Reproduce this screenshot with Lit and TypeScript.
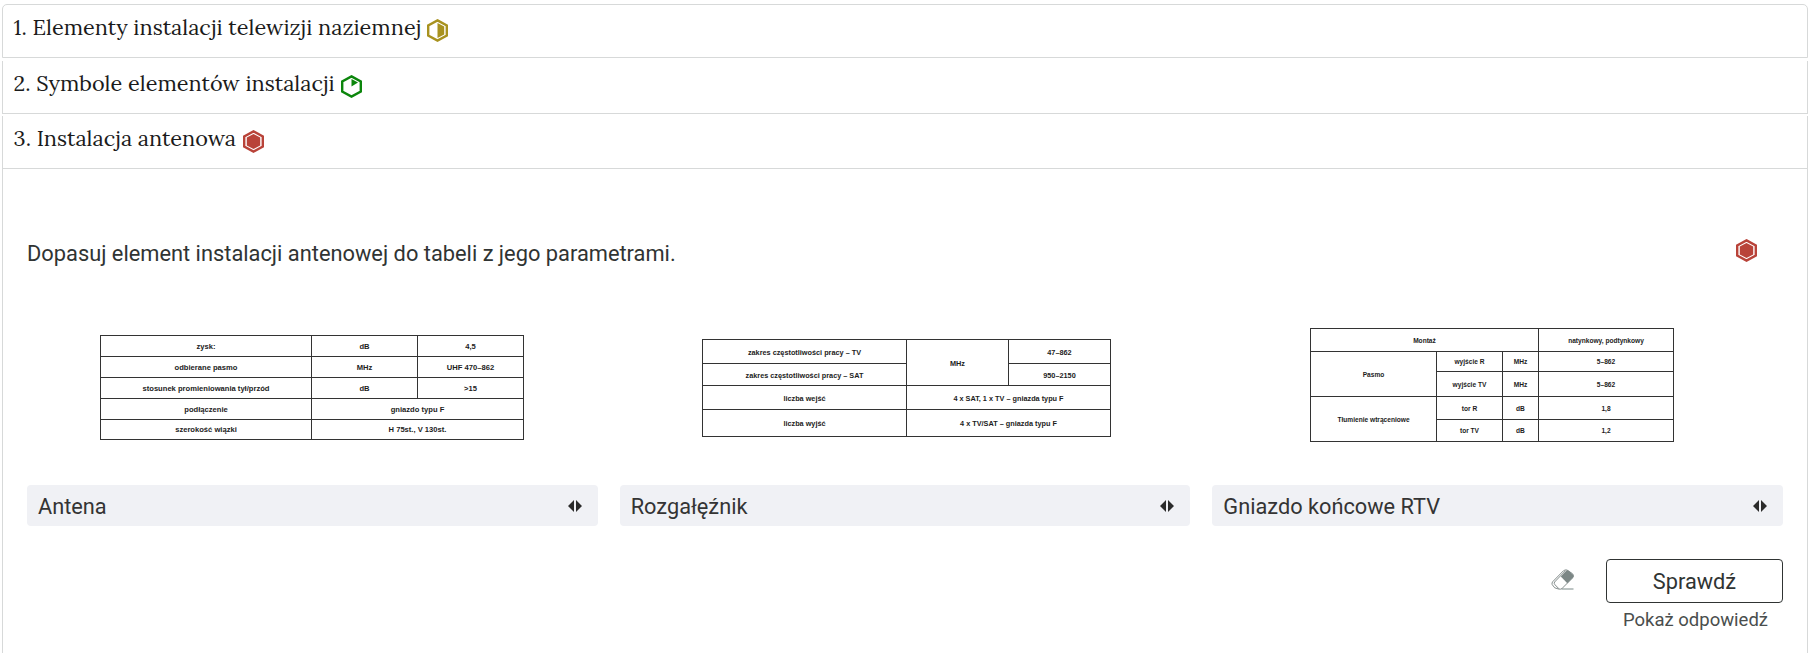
import { LitElement, html, css, svg } from "lit";
import { customElement, property } from "lit/decorators.js";

type Level = "easy" | "medium" | "hard";

@customElement("level-icon")
class LevelIcon extends LitElement {
  @property() level: Level = "easy";
  static styles = css`
    :host { display: block; width: 21px; height: 23px; flex: none; }
    svg { display: block; }
    .easy { color: #0c860c; }
    .medium { color: #a8921f; }
    .hard { color: #b94339; }
  `;
  render() {
    const inner = {
      easy: svg`<path d="M10.5 4L17 7.6L10.5 11.5Z" fill="currentColor"/>`,
      medium: svg`<path d="M10.5 3.9L17.2 7.6V15.4L10.5 19.1Z" fill="currentColor"/>`,
      hard: svg`<path d="M10.5 3.9L17.2 7.6V15.4L10.5 19.1L3.8 15.4V7.6Z" fill="currentColor"/>`,
    }[this.level];
    return html`<svg class=${this.level} width="21" height="23" viewBox="0 0 21 23">
      <path d="M10.5 1.4L19.8 6.4V16.6L10.5 21.6L1.2 16.6V6.4Z" fill="none" stroke="currentColor" stroke-width="2.4"/>
      ${inner}
    </svg>`;
  }
}

interface Cell { t: string; c?: number; r?: number; }

@customElement("param-table")
class ParamTable extends LitElement {
  @property({ attribute: false }) cells: Cell[] = [];
  @property() variant = "a";
  static styles = css`
    :host { display: block; }
    .grid {
      display: grid; width: max-content; gap: 1px; padding: 1px; background: #333;
      font: bold 7.6px "Liberation Sans", Arial, sans-serif; color: #1c1c1c;
    }
    .a { grid-template-columns: 210px 105px 105px; grid-template-rows: 20px 20px 20px 20px 19px; }
    .b { grid-template-columns: 203px 101px 101px; grid-template-rows: 23px 21px 23px 26px; font-size: 7.3px; }
    .c { grid-template-columns: 125px 65px 35px 134px; grid-template-rows: 22px 19px 24px 22px 21px; font-size: 6.6px; }
    .cell { display: flex; align-items: center; justify-content: center; background: #fff; white-space: nowrap; line-height: 1; padding-top: 2px; }
    .a .cell { padding-top: 1px; }
    .c2 { grid-column: span 2; }
    .c3 { grid-column: span 3; }
    .r2 { grid-row: span 2; }
  `;
  render() {
    return html`<div class="grid ${this.variant}">${this.cells.map(
      (x) => html`<div class="cell ${x.c ? `c${x.c}` : ""} ${x.r ? `r${x.r}` : ""}">${x.t}</div>`
    )}</div>`;
  }
}

@customElement("app-root")
class AppRoot extends LitElement {
  static styles = css`
    :host {
      display: block; box-sizing: border-box; height: 653px; overflow: hidden;
      padding: 4px 3px 0 2px; background: #fff;
      font-family: Roboto, "Open Sans", sans-serif; color: #303433;
    }
    .head {
      box-sizing: border-box; display: flex; align-items: flex-start;
      border: 1px solid #d7d9d9; border-top: 0; padding: 8px 0 0 10.6px;
      font-family: Lora, "Liberation Serif", serif; font-size: 21.7px; line-height: 28px; color: #1b1b1b;
    }
    .title { white-space: nowrap; }
    .h1 { height: 54px; border-top: 1px solid #d7d9d9; border-radius: 5px 5px 0 0; }
    .h2 { height: 53px; margin-top: 3px; }
    .h3 { height: 53px; margin-top: 2px; }
    .head level-icon { margin: 6px 0 0 6.5px; }
    .h1 level-icon { margin-left: 5.8px; }
    .body { box-sizing: border-box; height: 484px; border: solid #d7d9d9; border-width: 0 1px; padding: 70px 24px 0; }
    .prompt { display: flex; justify-content: space-between; height: 89px; padding-right: 26px; font-size: 21.84px; line-height: 29px; }
    .cols { display: grid; grid-template-columns: repeat(3, 1fr); column-gap: 22px; }
    .pic { height: 157px; display: flex; align-items: flex-start; box-sizing: border-box; }
    .p1 { padding: 7px 0 0 73px; }
    .p2 { padding: 11px 0 0 82.34px; }
    .p3 { padding: 0 0 0 97.67px; }
    .select {
      display: flex; align-items: center; justify-content: space-between; height: 41px; box-sizing: border-box;
      padding: 2px 16px 0 11px; border-radius: 4px; background: #f0f1f5; font-size: 21.76px; color: #343434;
    }
    .select svg { margin-top: -1px; }
    .foot { display: flex; justify-content: flex-end; align-items: flex-start; margin-top: 33px; }
    .eraser { margin: 10px 30px 0 0; }
    .actions { width: 177px; display: flex; flex-direction: column; align-items: center; }
    .check {
      box-sizing: border-box; width: 177px; height: 44px; border: 1px solid #303433; border-radius: 4px;
      background: #fff; font: 21.76px Roboto, sans-serif; color: #303433; padding: 0;
    }
    .show { font-size: 18.5px; line-height: 24px; margin: 5px 0 0 2px; color: #4a4e4d; }
  `;

  private columns = [
    { v: "a", p: "p1", label: "Antena", cells: [
      { t: "zysk:" }, { t: "dB" }, { t: "4,5" },
      { t: "odbierane pasmo" }, { t: "MHz" }, { t: "UHF 470–862" },
      { t: "stosunek promieniowania tył/przód" }, { t: "dB" }, { t: ">15" },
      { t: "podłączenie" }, { t: "gniazdo typu F", c: 2 },
      { t: "szerokość wiązki" }, { t: "H 75st., V 130st.", c: 2 },
    ] },
    { v: "b", p: "p2", label: "Rozgałęźnik", cells: [
      { t: "zakres częstotliwości pracy – TV" }, { t: "MHz", r: 2 }, { t: "47–862" },
      { t: "zakres częstotliwości pracy – SAT" }, { t: "950–2150" },
      { t: "liczba wejść" }, { t: "4 x SAT, 1 x TV – gniazda typu F", c: 2 },
      { t: "liczba wyjść" }, { t: "4 x TV/SAT – gniazda typu F", c: 2 },
    ] },
    { v: "c", p: "p3", label: "Gniazdo końcowe RTV", cells: [
      { t: "Montaż", c: 3 }, { t: "natynkowy, podtynkowy" },
      { t: "Pasmo", r: 2 }, { t: "wyjście R" }, { t: "MHz" }, { t: "5–862" },
      { t: "wyjście TV" }, { t: "MHz" }, { t: "5–862" },
      { t: "Tłumienie wtrąceniowe", r: 2 }, { t: "tor R" }, { t: "dB" }, { t: "1,8" },
      { t: "tor TV" }, { t: "dB" }, { t: "1,2" },
    ] },
  ];

  render() {
    return html`
      <div class="head h1"><span class="title">1. Elementy instalacji telewizji naziemnej</span><level-icon level="medium"></level-icon></div>
      <div class="head h2"><span class="title">2. Symbole elementów instalacji</span><level-icon level="easy"></level-icon></div>
      <div class="head h3"><span class="title">3. Instalacja antenowa</span><level-icon level="hard"></level-icon></div>
      <div class="body">
        <div class="prompt"><span>Dopasuj element instalacji antenowej do tabeli z jego parametrami.</span><level-icon level="hard"></level-icon></div>
        <div class="cols">
          ${this.columns.map((c) => html`<div>
            <div class="pic ${c.p}"><param-table .variant=${c.v} .cells=${c.cells}></param-table></div>
            <div class="select"><span>${c.label}</span>
              <svg width="14" height="12" viewBox="0 0 14 12" fill="#2b2b2b"><path d="M6 0V12L0 6ZM8 0V12L14 6Z"/></svg>
            </div>
          </div>`)}
        </div>
        <div class="foot">
          <svg class="eraser" width="25" height="22" viewBox="0 0 25 22">
            <path d="M10.5 20H22.5" stroke="#bcc4c3" stroke-width="2"/>
            <path d="M12.3 1.9Q14 .5 16 1L21.5 4.7Q23 6 22 8.5L11.2 19.3Q10 20.6 7.8 20.1L3.7 18.8L1.2 15.6Q.6 14 1.6 12.8Z" fill="#fff" stroke="#848d8c"/>
            <path d="M14.6 1.6L3.6 13Q2.6 14.4 4 15.8L8 19.8" fill="none" stroke="#848d8c"/>
            <path d="M9.8 7.6L15.3 1.8Q16.4.7 17.7 1.8L22 5.7Q23.4 7.2 22 8.6L16.3 14.2Z" fill="#7c8786"/>
          </svg>
          <div class="actions"><button class="check">Sprawdź</button><div class="show">Pokaż odpowiedź</div></div>
        </div>
      </div>`;
  }
}
